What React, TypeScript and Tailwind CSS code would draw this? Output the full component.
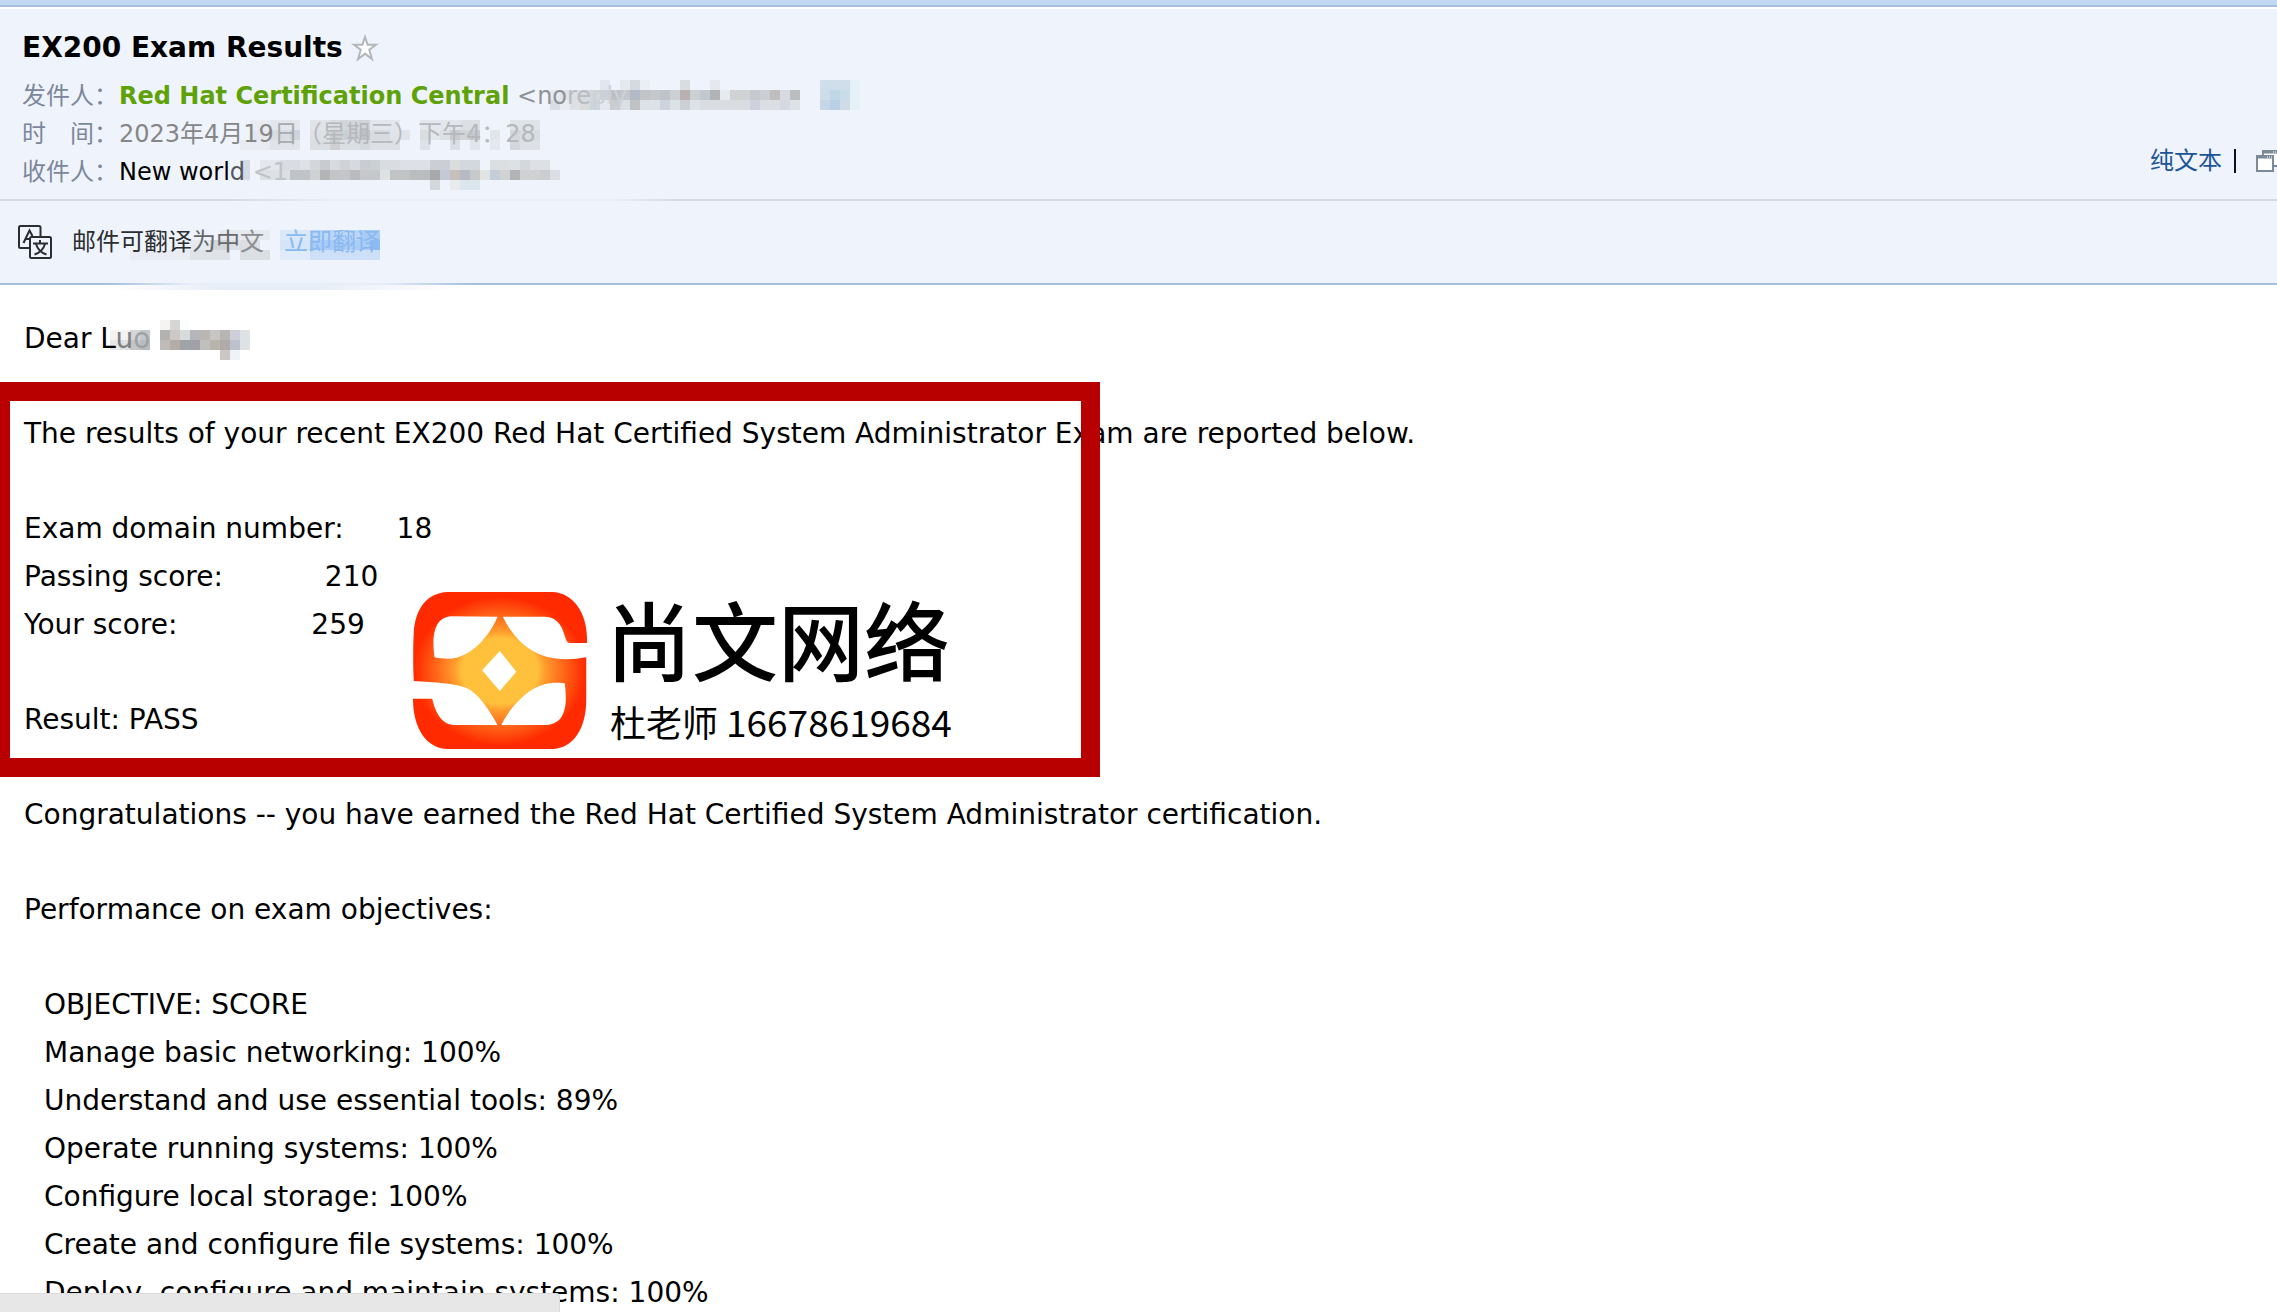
type Cell = [x: number, y: number, width: number, color: string];

const facts = [
  { label: "Exam domain number:", gap: "ml-[53px]", value: "18" },
  { label: "Passing score:", gap: "ml-[102px]", value: "210" },
  { label: "Your score:", gap: "ml-[134px]", value: "259" },
];

const objectives = [
  { name: "OBJECTIVE", score: "SCORE" },
  { name: "Manage basic networking", score: "100%" },
  { name: "Understand and use essential tools", score: "89%" },
  { name: "Operate running systems", score: "100%" },
  { name: "Configure local storage", score: "100%" },
  { name: "Create and configure file systems", score: "100%" },
  { name: "Deploy, configure and maintain systems", score: "100%" },
];

// Each cell is 10px high: x, y, width, colour
const senderCells: Cell[] = [
  [60, 0, 10, "#e2e6ee"], [80, 0, 10, "#e5e9ed"], [90, 0, 10, "#d5dae0"], [100, 0, 10, "#e9eff5"],
  [140, 0, 10, "#d8dde0"], [170, 0, 10, "#e5e9ed"],
  [10, 10, 10, "#e6eaf0"], [20, 10, 10, "#e0e4e9"], [30, 10, 10, "#dcdfe3"], [40, 10, 10, "#d7dadf"],
  [50, 10, 10, "#d3d6da"], [60, 10, 10, "#cbd1d8"], [70, 10, 10, "#bcc0c6"], [80, 10, 10, "#c3c7cb"],
  [90, 10, 10, "#b3bac5"], [100, 10, 10, "#c1c4c8"], [110, 10, 10, "#c6c7ca"], [120, 10, 10, "#bfc4cb"],
  [130, 10, 10, "#cccfd3"], [140, 10, 10, "#b8b1ae"], [150, 10, 10, "#cdd0d2"], [160, 10, 10, "#c2c8d0"],
  [170, 10, 10, "#b3b3b5"], [180, 10, 10, "#e6ebf0"], [190, 10, 20, "#d1d2d3"], [210, 10, 10, "#c6c9d0"],
  [220, 10, 10, "#ccced3"], [230, 10, 10, "#c0bebc"], [240, 10, 10, "#d7dbe1"], [250, 10, 10, "#bbbdc0"],
  [10, 20, 10, "#d9dce4"], [20, 20, 10, "#e8ebf0"], [30, 20, 10, "#dfe0e5"], [40, 20, 10, "#dcdbdc"],
  [50, 20, 10, "#cbd6de"], [60, 20, 10, "#e4e8ee"], [70, 20, 10, "#caccd0"], [80, 20, 10, "#dbe0e6"],
  [90, 20, 10, "#bfc1c3"], [100, 20, 20, "#dde2e8"], [120, 20, 10, "#cdd4de"], [130, 20, 10, "#dde2e7"],
  [140, 20, 10, "#ccd0d4"], [150, 20, 10, "#dde2e8"], [160, 20, 50, "#d9dce0"], [210, 20, 10, "#cfd2de"],
  [220, 20, 20, "#dbdfe3"], [240, 20, 10, "#d5d9e1"], [250, 20, 10, "#dee2e7"],
  [280, 0, 30, "#cfdeea"], [310, 0, 10, "#e6f0f7"],
  [280, 10, 10, "#cddeea"], [290, 10, 10, "#c0d7e8"], [300, 10, 10, "#cadce8"], [310, 10, 10, "#e6f0f7"],
  [280, 20, 10, "#c5d7e6"], [290, 20, 10, "#b9d0e4"], [300, 20, 10, "#cfdce7"], [310, 20, 10, "#e6f0f7"],
];

const timeCells: Cell[] = [
  [10, 0, 20, "#e9edf3"], [30, 0, 30, "#e3e7ed"], [70, 0, 20, "#e0e4e9"], [90, 0, 10, "#d9dcdf"],
  [100, 0, 20, "#d2d7dc"], [120, 0, 10, "#d0d4d8"], [130, 0, 30, "#e3e7ed"], [180, 0, 40, "#e3e7ed"],
  [220, 0, 20, "#dce0e5"], [270, 0, 30, "#dfe4e9"],
  [10, 10, 20, "#e5e9ef"], [30, 10, 20, "#d9dde4"], [50, 10, 10, "#cfd4dc"], [70, 10, 20, "#dde0e5"],
  [90, 10, 10, "#cfcfd0"], [100, 10, 20, "#cbd0d5"], [120, 10, 10, "#bfc3c8"], [130, 10, 20, "#d8dce0"],
  [150, 10, 20, "#e1e5ea"], [180, 10, 10, "#dadde0"], [190, 10, 10, "#e3e7ed"], [200, 10, 10, "#dcdfe3"],
  [210, 10, 10, "#c8cbcf"], [220, 10, 10, "#d2d4d6"], [230, 10, 10, "#c5c9cf"], [250, 10, 10, "#e1e5ea"],
  [270, 10, 10, "#d4d8dc"], [280, 10, 20, "#d8dde3"],
  [0, 20, 30, "#e8ecf2"], [30, 20, 30, "#e0e4ea"], [70, 20, 20, "#dbdee2"], [90, 20, 10, "#cfcfd1"],
  [100, 20, 20, "#dbdfe4"], [120, 20, 10, "#d4d9de"], [130, 20, 30, "#dde1e6"], [180, 20, 10, "#dde1e8"],
  [210, 20, 10, "#dbe0e7"], [230, 20, 10, "#e1e5ec"], [250, 20, 10, "#e5e9ef"], [270, 20, 10, "#d4d8dc"],
  [280, 20, 20, "#dde1e7"],
];

const receiverCells: Cell[] = [
  [0, 0, 10, "#d5d9e3"], [20, 0, 20, "#e4e8ee"], [40, 0, 20, "#d9dce2"], [60, 0, 10, "#dde2e7"],
  [70, 0, 10, "#d3d7db"], [80, 0, 10, "#c8cbcf"], [90, 0, 10, "#d7dade"], [100, 0, 10, "#cfd3d7"],
  [110, 0, 10, "#d6dae0"], [120, 0, 10, "#c9ccd0"], [130, 0, 10, "#cbd0d5"], [140, 0, 20, "#d9dde1"],
  [160, 0, 30, "#dde1e7"], [190, 0, 10, "#cbced2"], [200, 0, 10, "#cbcfd5"], [210, 0, 10, "#dadcde"],
  [220, 0, 20, "#d2d8dd"], [250, 0, 20, "#dcdfe2"], [270, 0, 10, "#dde1e5"], [280, 0, 10, "#d3d8dc"],
  [290, 0, 20, "#dde1e5"],
  [0, 10, 10, "#d5dae4"], [20, 10, 30, "#dcdfe4"], [50, 10, 20, "#c0c3c7"], [70, 10, 10, "#cfd1d3"],
  [80, 10, 10, "#b3b4b6"], [90, 10, 20, "#c3c5c9"], [110, 10, 10, "#b9bbbe"], [120, 10, 20, "#c6c7ca"],
  [140, 10, 10, "#dde2e5"], [150, 10, 20, "#c2c3c5"], [170, 10, 20, "#babdbf"], [190, 10, 10, "#a9a9ab"],
  [200, 10, 10, "#c3cad4"], [210, 10, 10, "#c6bfbc"], [220, 10, 10, "#b5bac4"], [230, 10, 10, "#c7c9cb"],
  [240, 10, 10, "#e1e4e5"], [250, 10, 10, "#c4ced9"], [260, 10, 10, "#d1d2d2"], [270, 10, 10, "#b1b3b6"],
  [280, 10, 20, "#d0d1d3"], [300, 10, 10, "#cccdd0"], [310, 10, 10, "#dbdfe5"],
  [190, 20, 10, "#d4d8dd"], [210, 20, 10, "#e8ebee"], [220, 20, 20, "#dbe6ee"],
];

const translateCells: Cell[] = [
  [90, 0, 50, "#e6e9ee"], [150, 0, 30, "#dbe8f7"], [180, 0, 50, "#bcd7f6"], [230, 0, 20, "#a9ccf4"],
  [60, 10, 20, "#e6eaef"], [80, 10, 20, "#d3d6da"], [100, 10, 30, "#dcdfe3"], [150, 10, 30, "#d5e4f7"],
  [180, 10, 60, "#abccf4"], [240, 10, 10, "#8fbcf0"],
  [0, 20, 60, "#e9edf3"], [60, 20, 40, "#dfe2e7"], [110, 20, 30, "#dbdfe4"], [150, 20, 30, "#dfebf8"],
  [180, 20, 70, "#cde0f7"],
];

const nameCells: Cell[] = [
  [0, 0, 10, "#fbfafa"], [60, 0, 10, "#f5f4f3"], [70, 0, 10, "#d5d5d5"], [80, 0, 10, "#fbfcfc"],
  [10, 10, 20, "#f4f3f2"], [30, 10, 10, "#d4d6d8"], [40, 10, 10, "#c3c6ca"], [60, 10, 10, "#b3b2b1"],
  [70, 10, 10, "#cdc7c5"], [80, 10, 10, "#d7dbdb"], [90, 10, 10, "#b5b5bc"], [100, 10, 10, "#bcb6b3"],
  [110, 10, 10, "#c8c6c3"], [120, 10, 10, "#b7b6b4"], [130, 10, 10, "#cfcfd8"], [140, 10, 10, "#dde2e7"],
  [10, 20, 10, "#e6e7e8"], [20, 20, 10, "#dfe2e4"], [30, 20, 10, "#c3c5c6"], [40, 20, 10, "#b9bcbe"],
  [60, 20, 10, "#bdbcba"], [70, 20, 10, "#b5aca8"], [80, 20, 10, "#9ea4a7"], [90, 20, 10, "#a1a0a8"],
  [100, 20, 10, "#c0bfbd"], [110, 20, 10, "#b8b6ab"], [120, 20, 10, "#b0aba8"], [130, 20, 10, "#bcc1cd"],
  [140, 20, 10, "#dde2e6"], [120, 30, 10, "#cbc7c4"], [130, 30, 10, "#eff3f7"],
];

export default function App() {
  return (
    <div className="min-h-screen overflow-hidden bg-white font-['DejaVu_Sans','Noto_Sans_CJK_SC',sans-serif] text-black">
      <div className="h-[7px] border-b-2 border-[#a6bfdf] bg-[#c2d8f2]" />
      <MailHeader />
      <TranslateBar />
      <MailBody />
      <div className="fixed bottom-0 left-0 h-[19px] w-[560px] rounded-tr border-t border-r border-[#dcdcdc] bg-[#e7e7e7]" />
    </div>
  );
}

function MailHeader() {
  return (
    <header className="relative mt-0.5 flex items-end justify-between bg-[#eff4fc] pb-2 pl-[22px] pt-[19px]">
      <Mosaic cells={senderCells} className="left-[540px] top-[71px]" />
      <Mosaic cells={timeCells} className="left-[240px] top-[111px]" />
      <Mosaic cells={receiverCells} className="left-[240px] top-[151px]" />

      <div className="relative">
        <div className="mb-[9px] flex h-10 items-center gap-2">
          <h1 className="text-[28px] font-bold">EX200 Exam Results</h1>
          <button type="button" aria-label="星标">
            <StarIcon />
          </button>
        </div>
        <dl className="grid grid-cols-[97px_auto] whitespace-nowrap text-2xl leading-[38px]">
          <dt className="text-[#7c879b]">发件人：</dt>
          <dd className="text-[#8f9296]">
            <b className="text-[#5fa207]">Red Hat Certification Central</b>{" "}
            &lt;no<span className="text-[#b9bcc1]">re</span>
            <span className="text-[#cdd0d5]">ply</span>
          </dd>
          <dt className="text-[#7c879b]">时　间：</dt>
          <dd className="text-[#868686]">
            2023年4月19<span className="text-[#a7aaae]">日</span>
            <span className="text-[#b5b8bc]">（星期三）下午4：28</span>
          </dd>
          <dt className="text-[#7c879b]">收件人：</dt>
          <dd>
            New worl<span className="text-[#55585c]">d</span>{" "}
            <span className="text-[#c0c3c8]">&lt;1</span>
          </dd>
        </dl>
      </div>

      <div className="mb-[18px] flex h-6 items-center text-2xl">
        <a href="#text" className="text-[#1c5499]">
          纯文本
        </a>
        <span className="ml-3 mr-5 h-6 w-0.5 bg-[#0b1020]" />
        <button type="button" aria-label="新窗口打开">
          <WindowsIcon />
        </button>
      </div>
    </header>
  );
}

function TranslateBar() {
  return (
    <section className="relative bg-[#eff4fc]">
      {/* Separador superior, difuminado bajo la zona oculta */}
      <div className="h-0.5 bg-[linear-gradient(to_right,#d5dade_220px,#ebf0f8_340px,#ebf0f8_610px,#d5dade_680px)]" />
      <Mosaic cells={translateCells} className="left-[130px] top-[31px]" />
      <div className="relative flex h-[82px] items-center pl-[18px] text-2xl">
        <TranslateIcon />
        <span className="ml-5 text-[#2c2e31]">
          邮件可翻译<span className="text-[#65686c]">为中</span>
          <span className="text-[#8b8e92]">文</span>
        </span>
        <a href="#translate" className="ml-5 text-[#8ab9f1]">
          立即翻译
        </a>
      </div>
      <div className="h-0.5 bg-[linear-gradient(to_right,#a6bfdf_110px,#e8eef7_190px,#e8eef7_380px,#a6bfdf_470px)]" />
      <div className="absolute left-[110px] top-full h-[5px] w-[350px] bg-[linear-gradient(to_right,#ffffff,#e8eef7_30%,#e8eef7_60%,#ffffff)]" />
    </section>
  );
}

function MailBody() {
  return (
    <main className="relative flex flex-col gap-[47px] whitespace-nowrap pl-6 pt-[30px] text-[28px] leading-[48px]">
      <Mosaic cells={nameCells} className="left-[100px] top-[35px]" />
      <p className="relative">
        Dear L<span className="text-[#7d7f81]">u</span>
        <span className="text-[#9fa2a4]">o</span>
      </p>
      <p>
        The results of your recent EX200 Red Hat Certified System Administrator
        Exam are reported below.
      </p>
      <dl>
        {facts.map((f) => (
          <div key={f.label} className="flex">
            <dt>{f.label}</dt>
            <dd className={f.gap}>{f.value}</dd>
          </div>
        ))}
      </dl>
      <p>Result: PASS</p>
      <p>
        Congratulations -- you have earned the Red Hat Certified System
        Administrator certification.
      </p>
      <p>Performance on exam objectives:</p>
      <ul className="pl-5">
        {objectives.map((o) => (
          <li key={o.name}>
            {o.name}: {o.score}
          </li>
        ))}
      </ul>

      {/* Marco rojo y sello sobre el texto */}
      <div className="absolute left-0 top-[97px] h-[395px] w-[1100px] border-y-[19px] border-l-[10px] border-r-[19px] border-[#b90000]" />
      <Stamp />
    </main>
  );
}

function Stamp() {
  return (
    <div className="absolute left-[413px] top-[307px] flex gap-[23px]">
      <StampLogo />
      <div>
        <p className="-ml-1 font-['Liberation_Sans','Noto_Sans_CJK_SC',sans-serif] text-[86px] font-medium leading-[106px]">
          尚文网络
        </p>
        <p className="flex items-center gap-2 font-['Noto_Sans_CJK_SC',sans-serif] text-4xl leading-[46px]">
          杜老师
          <span className="text-[37px]">16678619684</span>
        </p>
      </div>
    </div>
  );
}

function Mosaic({ cells, className }: { cells: Cell[]; className: string }) {
  const width = Math.max(...cells.map((c) => c[0] + c[2]));
  return (
    <svg
      aria-hidden="true"
      width={width}
      height={40}
      shapeRendering="crispEdges"
      className={`absolute ${className}`}
    >
      {cells.map(([x, y, w, color], i) => (
        <rect key={i} x={x} y={y} width={w} height={10} fill={color} />
      ))}
    </svg>
  );
}

function StarIcon() {
  return (
    <svg width="28" height="30" viewBox="0 0 28 30">
      <path
        d="M14 4 16.600 11.700H25L18.300 16.700 20.900 26 14 20.600 7.100 26 9.700 16.700 3 11.700H11.400z"
        fill="#fff"
        stroke="#b4b6b9"
        strokeWidth="2"
      />
    </svg>
  );
}

function TranslateIcon() {
  return (
    <svg width="34" height="34" viewBox="0 0 34 34" fill="none" stroke="#2b2d31" strokeWidth="2">
      <path d="M11 23H2.5A1.5 1.5 0 0 1 1 21.500V2.500A1.500 1.500 0 0 1 2.500 1H21a1.500 1.500 0 0 1 1.500 1.500V11" />
      <rect x="12" y="12" width="21" height="21" rx="1.5" />
      <path d="M5.500 18 11.500 5.500 14.500 11M8 14h4" />
      <path d="M15 18.500h15M22 15v3.500M18 19c1.500 5 5.500 9 10.500 10.500M27 19c-1.500 5-5.500 9-10.500 10.500" />
    </svg>
  );
}

function WindowsIcon() {
  return (
    <svg width="21" height="22" viewBox="0 0 21 22" fill="#fff" stroke="#7b8a96" strokeWidth="2">
      <rect x="7" y="1" width="18" height="15" />
      <path d="M7 2h18" strokeWidth="3" />
      <rect x="1" y="6" width="16" height="15" />
      <path d="M1 7h16" strokeWidth="3" />
      <path d="M11 7h5M17 2h4" stroke="#fff" strokeWidth="1" strokeDasharray="1 1" />
    </svg>
  );
}

function StampLogo() {
  return (
    <svg width="174" height="157" viewBox="62 66 453 471" preserveAspectRatio="none">
      <defs>
        <radialGradient id="stamp" gradientUnits="userSpaceOnUse" cx="288" cy="303" r="235">
          <stop offset="0" stopColor="#ffc33d" />
          <stop offset="0.42" stopColor="#ffc03c" />
          <stop offset="0.5" stopColor="#ff9e2e" />
          <stop offset="0.72" stopColor="#ff6318" />
          <stop offset="0.95" stopColor="#ff2a00" />
        </radialGradient>
      </defs>
      <path
        fill="url(#stamp)"
        fillRule="evenodd"
        d="M152 66H425C478 68 515 128 515 205V219H472C462 219 460 208 457 197C448 160 433 140 403 140H296C325 210 375 268 460 268C480 268 495 266 513 262V390C513 475 480 535 425 537H152C97 535 62 475 62 386H112C122 435 140 465 172 465H282C262 420 228 365 200 353C170 340 120 337 64 333C62 280 62 230 64 190C67 115 100 68 152 66ZM282 140C265 190 215 266 153 266C140 266 130 265 118 262C110 195 118 142 162 139ZM292 465C320 400 375 338 430 338C440 338 448 338 457 340C465 410 458 462 408 465ZM288 243L331 305 288 363 242 301Z"
      />
    </svg>
  );
}
